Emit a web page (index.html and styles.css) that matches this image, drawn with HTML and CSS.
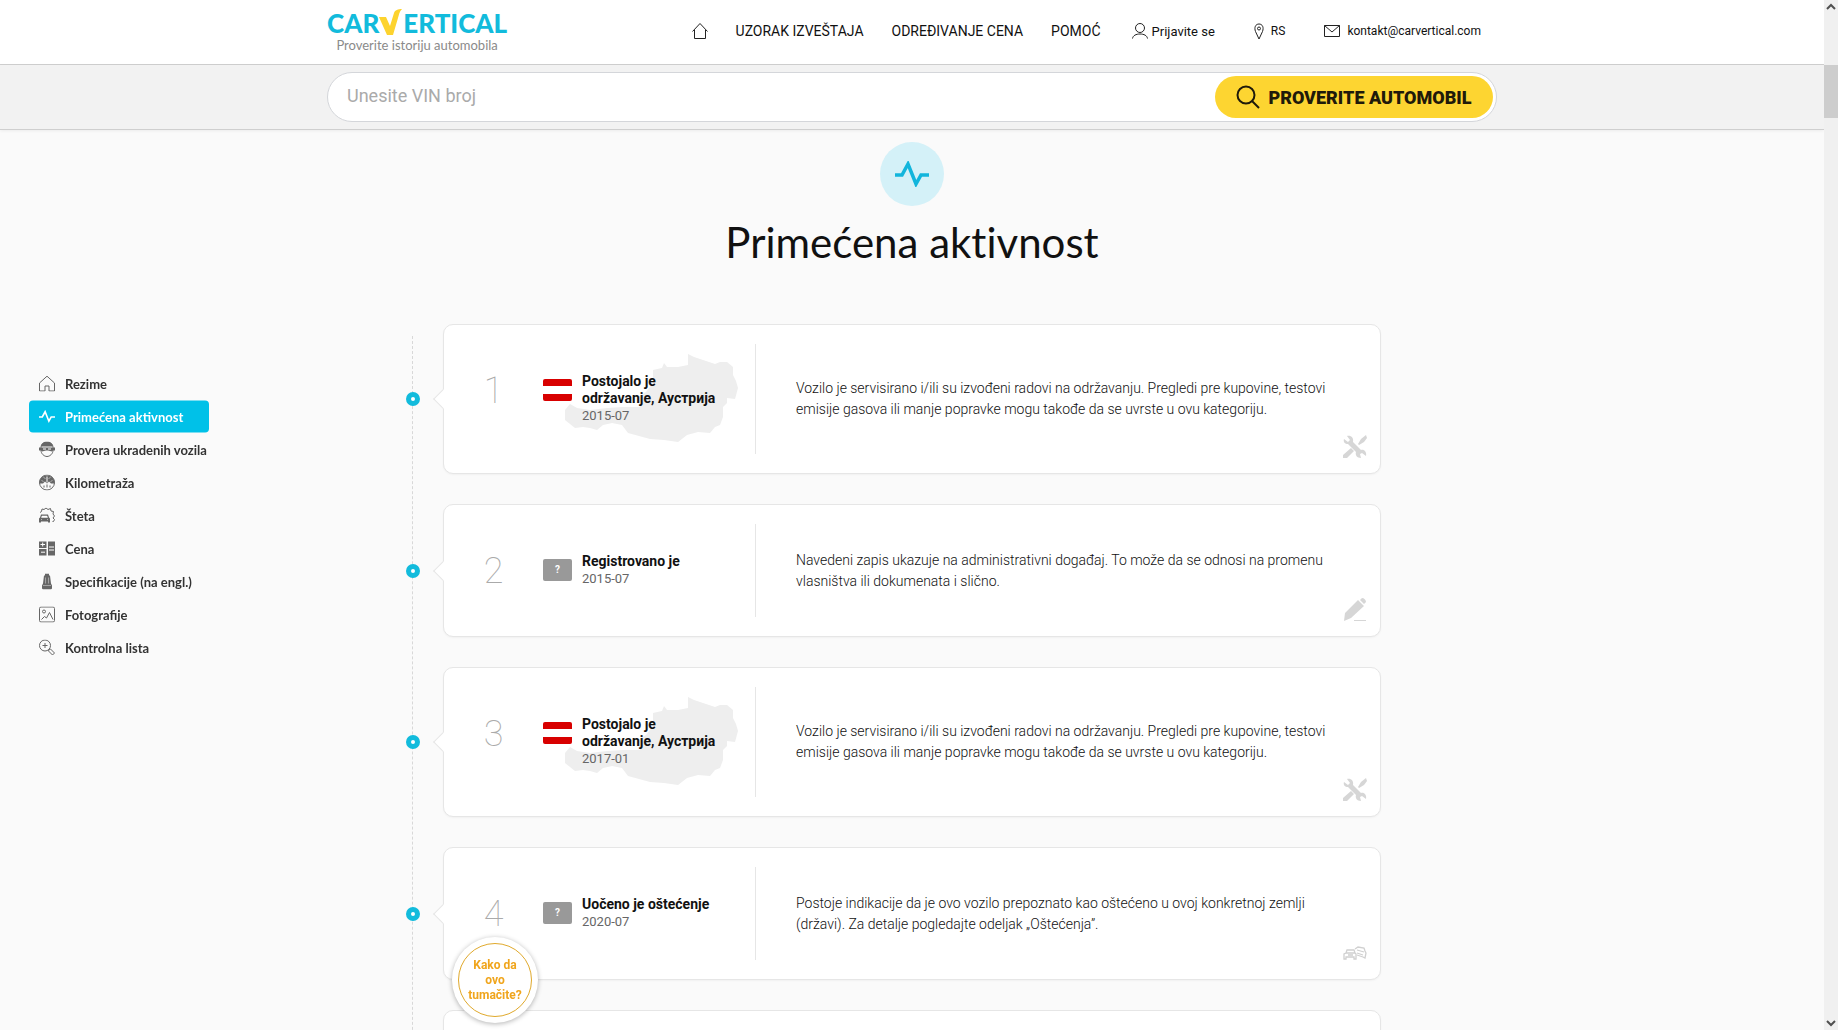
FILE: index.html
```html
<!DOCTYPE html>
<html lang="sr">
<head>
  <meta charset="UTF-8" />
  <meta name="viewport" content="width=device-width, initial-scale=1.0" />
  <title>carVertical - Primećena aktivnost</title>
  <link rel="stylesheet" href="styles.css">
</head>
<body>

  <!-- shared icons -->
  <svg class="sprite" xmlns="http://www.w3.org/2000/svg">
    <symbol id="pulse" viewBox="0 0 34 26">
      <path d="M0 14h7L13 3l8 20 5-9h8" fill="none" stroke="currentColor" stroke-width="3.500"/>
    </symbol>
    <symbol id="austria" viewBox="0 0 175 88">
      <path d="M125 0l6 3 9 3 12 4 5-2 7 0 6 5 0 8 3 6 2 7-3 11-8-1 0 5-4 4 0 10-3 8-5 2-5 6-12-1-11 3-9 7-14-2-14-1-22-6-6-8-10-2-9 2-6 5-7-2-7-1-8 1-10-8 0-10 5-6 7 4 13 2 17-2 16-1 17 0-2-10 8-5 7-9 0-13 9-2 2-5 3 4 11 0 10-2z" fill="#eee"/>
    </symbol>
    <symbol id="tools" viewBox="0 0 24 24">
      <path d="M1 4l4 3 2-2-3-4c4-1 7 2 6 6l8 8c3-1 6 2 5 6l-4-3-2 1 1 4c-4 0-6-3-5-6L5 9C2 9 0 7 1 4z" fill="#d6d6d6"/>
      <path d="M8 13l3 3-7 7-4 0 0-3zM23 0l1 3-3 4-5 3-1-1 3-5z" fill="#d6d6d6"/>
    </symbol>
    <symbol id="pencil" viewBox="0 0 24 24">
      <path d="M17 2l2-2c2 0 4 2 4 4l-2 2zM15 2l6 6L8 20l-7 3 1-8z" fill="#d6d6d6"/>
      <path d="M11 22.500h12" stroke="#d6d6d6"/>
    </symbol>
    <symbol id="cars" viewBox="0 0 24 14">
      <g fill="none" stroke="#d0d0d0" stroke-width="1.300">
        <path d="M1 13V8l2-1 1-3h7l1 3 1 1v5h-2v-2H3v2zM3 7h9M5 9h5"/>
        <path d="M12 3l3-2 6 1 1 3 1 2-1 5-2-1-6-2M14 4l7 2M14 7l6 2"/>
      </g>
    </symbol>
  </svg>

  <div class="page">
    <header class="topbar">
      <div class="container topbar-inner">
        <a class="brand" href="#">
          <span class="brand-name">CAR<svg class="brand-check" viewBox="0 0 24 28"><path d="M0 8h7l4 9L15 4c1-3 4-4 8-4-3 3-3 6-4 9l-5 17H8z" fill="#fdd32e"/></svg>ERTICAL</span>
          <span class="brand-slogan">Proverite istoriju automobila</span>
        </a>
        <nav class="topnav">
          <a href="#" aria-label="Početna">
            <svg class="icon" viewBox="0 0 16 16"><path d="M.5 8.500L8 .5l7.500 8M2.500 7v8.500h11V7" fill="none" stroke="#222"/></svg>
          </a>
          <a href="#">UZORAK IZVEŠTAJA</a>
          <a href="#">ODREĐIVANJE CENA</a>
          <a href="#">POMOĆ</a>
        </nav>
        <div class="usernav">
          <a href="#" class="login">
            <svg class="icon" viewBox="0 0 16 16"><g fill="none" stroke="#222"><ellipse cx="8" cy="5" rx="4.500" ry="4.500"/><path d="M.5 15.500C1 12.500 4 11 8 11s7 1.500 7.500 4.500"/></g></svg>
            Prijavite se
          </a>
          <a href="#" class="country">
            <svg class="pin" viewBox="0 0 10 16"><g fill="none" stroke="#222"><path d="M5 15.500L1.500 8C0 4 1.500.5 5 .5S10 4 8.500 8z"/><circle cx="5" cy="5" r="1.500"/></g></svg>
            RS
          </a>
          <a href="#" class="mail">
            <svg class="icon" viewBox="0 0 16 16"><path d="M.5 2.500h15v11H.5zM.5 2.500L8 9l7.500-6.500" fill="none" stroke="#222"/></svg>
            kontakt@carvertical.com
          </a>
        </div>
      </div>
    </header>

    <div class="searchbar">
      <form class="container search" onsubmit="return false">
        <input type="text" id="vin" aria-label="VIN broj" placeholder="Unesite VIN broj" />
        <button type="submit">
          <svg viewBox="0 0 24 24"><g fill="none" stroke="#1f1a0a" stroke-width="2"><circle cx="10" cy="10" r="8.500"/><path d="M16 16l7 7"/></g></svg>
          PROVERITE AUTOMOBIL
        </button>
      </form>
    </div>

    <main class="report">
      <div class="section-icon"><svg><use href="#pulse"/></svg></div>
      <h1>Primećena aktivnost</h1>

      <div class="timeline">
        <article class="card">
          <div class="number">1</div>
          <div class="event">
            <svg class="map"><use href="#austria"/></svg>
            <span class="flag austria"></span>
            <div class="event-text">
              <h2>Postojalo je održavanje, Аустрија</h2>
              <time datetime="2015-07">2015-07</time>
            </div>
          </div>
          <p class="description">Vozilo je servisirano i/ili su izvođeni radovi na održavanju. Pregledi pre kupovine, testovi emisije gasova ili manje popravke mogu takođe da se uvrste u ovu kategoriju.</p>
          <svg class="type-icon"><use href="#tools"/></svg>
        </article>

        <article class="card">
          <div class="number">2</div>
          <div class="event">
            <span class="flag unknown">?</span>
            <div class="event-text">
              <h2>Registrovano je</h2>
              <time datetime="2015-07">2015-07</time>
            </div>
          </div>
          <p class="description">Navedeni zapis ukazuje na administrativni događaj. To može da se odnosi na promenu vlasništva ili dokumenata i slično.</p>
          <svg class="type-icon"><use href="#pencil"/></svg>
        </article>

        <article class="card">
          <div class="number">3</div>
          <div class="event">
            <svg class="map"><use href="#austria"/></svg>
            <span class="flag austria"></span>
            <div class="event-text">
              <h2>Postojalo je održavanje, Аустрија</h2>
              <time datetime="2017-01">2017-01</time>
            </div>
          </div>
          <p class="description">Vozilo je servisirano i/ili su izvođeni radovi na održavanju. Pregledi pre kupovine, testovi emisije gasova ili manje popravke mogu takođe da se uvrste u ovu kategoriju.</p>
          <svg class="type-icon"><use href="#tools"/></svg>
        </article>

        <article class="card">
          <div class="number">4</div>
          <div class="event">
            <span class="flag unknown">?</span>
            <div class="event-text">
              <h2>Uočeno je oštećenje</h2>
              <time datetime="2020-07">2020-07</time>
            </div>
          </div>
          <p class="description">Postoje indikacije da je ovo vozilo prepoznato kao oštećeno u ovoj konkretnoj zemlji (državi). Za detalje pogledajte odeljak „Oštećenja”.</p>
          <svg class="type-icon cars"><use href="#cars"/></svg>
        </article>

        <article class="card next"></article>
      </div>
    </main>

    <nav class="sidebar">
      <a href="#">
        <svg viewBox="0 0 16 16"><path d="M.5 7.500L8 .7l7.500 6.800v8H10v-5H6v5H.5z" fill="none" stroke="#666"/></svg>
        Rezime
      </a>
      <a href="#" class="active">
        <svg><use href="#pulse"/></svg>
        Primećena aktivnost
      </a>
      <a href="#">
        <svg viewBox="0 0 16 16"><path d="M2 6c0-3 2-5 6-5s6 2 6 5v3c0 3-3 6-6 6s-6-3-6-6z" fill="none" stroke="#666"/><path d="M2 5c0-3 3-5 6-5s6 2 6 5zM0 6h16v3h-2l-1 1-4-1H7l-4 1-1-1H0z" fill="#666"/><path d="M4 7.500h3M9 7.500h3" stroke="#fff"/></svg>
        Provera ukradenih vozila
      </a>
      <a href="#">
        <svg viewBox="0 0 16 16"><circle cx="8" cy="8" r="7.500" fill="none" stroke="#666"/><path d="M0 9a8 8 0 0 1 16 0h-4l-2-2-2 2-2-2-2 2z" fill="#666"/><path d="M8 8V2M3 6l1 1M13 6l-1 1M5 3l1 1M11 3l-1 1" stroke="#fff"/><path d="M5 11v2M8 10v3M11 11v2" stroke="#666"/></svg>
        Kilometraža
      </a>
      <a href="#">
        <svg viewBox="0 0 16 16"><path d="M1 5l1.500-1L3 1.500l2 .5L7 .5l2 1.500 2.500-1L12 3.500l2.500.5-.5 2.500 1.500 2-1.500 2 1.500 1.500-1 2h-1" fill="none" stroke="#666"/><path d="M0 15v-4l1-1 1-3h7l1 3 1 1v4H9v-1H2v1z" fill="#666"/><path d="M3 8.500h5l.5 1.500h-6zM2 12h1M8 12h1" fill="#fff" stroke="#fff" stroke-width=".5"/></svg>
        Šteta
      </a>
      <a href="#">
        <svg viewBox="0 0 16 16"><path d="M0 1h7.500v6.500H0zM0 8.500h7.500V15H0zM9 1h7v14H9z" fill="#666"/><path d="M1.500 4h4.500M3.700 2v4M2 11.700h4M10 6.500h5M10 9.500h5" stroke="#fff"/></svg>
        Cena
      </a>
      <a href="#">
        <svg viewBox="0 0 16 16"><path d="M6 0h4v2h1l1 8 1 2v3l-1 1H4l-1-1v-3l1-2 1-8h1z" fill="#666"/><path d="M6.500 4v6M9.500 4v6M4 12h8" stroke="#ccc" stroke-width=".6"/></svg>
        Specifikacije (na engl.)
      </a>
      <a href="#">
        <svg viewBox="0 0 16 16"><g fill="none" stroke="#666"><rect x=".5" y=".5" width="15" height="15" rx="1.500"/><circle cx="5" cy="5" r="1.500"/><path d="M2.500 13l3-3 2 1.500L10.500 6l3.500 7"/></g></svg>
        Fotografije
      </a>
      <a href="#">
        <svg viewBox="0 0 16 16"><g fill="none" stroke="#666"><circle cx="6" cy="6" r="5.500"/><path d="M3.500 6h5M6 3.500v5M10 10l1.500-.5 4 4-2 2-4-4z"/></g></svg>
        Kontrolna lista
      </a>
    </nav>

    <button class="help" type="button"><span>Kako da ovo tumačite?</span></button>

    <div class="scrollbar">
      <svg viewBox="0 0 14 14"><path d="M3 9l4-4 4 4" fill="none" stroke="#505050" stroke-width="2"/></svg>
      <div class="thumb"></div>
      <svg viewBox="0 0 14 14"><path d="M3 5l4 4 4-4" fill="none" stroke="#505050" stroke-width="2"/></svg>
    </div>
  </div>

</body>
</html>
```
FILE: styles.css
```css
:root {
  --blue: #00c1e8;
  --yellow: #fdd531;
  --border: #e6e6e6;
  --bg: #fafafa;
  --text: #111;
}
*, *::before, *::after {
  box-sizing: border-box;
}
body {
  margin: 0;
  font-family: Roboto, "Liberation Sans", sans-serif;
  font-size: 14px;
  color: var(--text);
  background: var(--bg);
}
a {
  color: inherit;
  text-decoration: none;
}
svg {
  display: block;
  flex-shrink: 0;
}
.sprite {
  display: none;
}
.page {
  height: 100vh;
  overflow: hidden;
  padding-right: 14px;
}
.container {
  width: 100%;
  max-width: 1170px;
  margin: 0 auto;
}

/* header */
.topbar {
  background: white;
  border-bottom: 1px solid #cfcfcf;
}
.topbar-inner {
  display: flex;
  align-items: flex-start;
  height: 64px;
  padding-right: 16px;
}
.brand {
  display: flex;
  flex-direction: column;
  align-items: center;
  padding-top: 8px;
  font-family: Lato, sans-serif;
}
.brand-name {
  display: flex;
  align-items: center;
  font-size: 26px;
  font-weight: 900;
  line-height: 30px;
  color: #12bbdc;
}
.brand-check {
  width: 24px;
  height: 28px;
}
.brand-slogan {
  font-size: 13px;
  line-height: 14px;
  color: #8a8a8a;
}
.topnav, .usernav, .usernav a {
  display: flex;
  align-items: center;
}
.topnav {
  gap: 28px;
  height: 62px;
  margin-left: auto;
}
.usernav {
  gap: 39px;
  height: 62px;
  margin-left: 31px;
  font-size: 12px;
}
.usernav a {
  gap: 7px;
}
.usernav .login {
  gap: 4px;
  font-size: 13px;
}
.icon {
  width: 16px;
  height: 16px;
}
.pin {
  width: 10px;
  height: 17px;
}

/* VIN search */
.searchbar {
  height: 65px;
  padding-top: 7px;
  background: #f2f2f2;
  border-bottom: 1px solid #cfcfcf;
  box-shadow: 0 1px 3px rgba(0, 0, 0, 0.06);
}
.search {
  display: flex;
  align-items: center;
  height: 50px;
  padding: 0 3px 0 19px;
  background: white;
  border: 1px solid #d4d6da;
  border-radius: 25px;
}
.search input {
  flex: 1;
  min-width: 0;
  padding: 0 0 3px;
  border: none;
  outline: none;
  background: none;
  font: 18px Roboto, sans-serif;
}
.search input::placeholder {
  color: #aaa;
}
.search button {
  display: flex;
  align-items: center;
  justify-content: center;
  gap: 8px;
  width: 278px;
  height: 42px;
  border: none;
  border-radius: 21px;
  background: var(--yellow);
  color: #1f1a0a;
  font: 900 18px Roboto, sans-serif;
  white-space: nowrap;
  cursor: pointer;
}
.search button svg {
  width: 24px;
  height: 24px;
}

/* activity report */
.report {
  padding-top: 12px;
}
.section-icon {
  display: flex;
  align-items: center;
  justify-content: center;
  width: 64px;
  height: 64px;
  margin: 0 auto;
  border-radius: 50%;
  background: #d4f1f8;
  color: #12b5dc;
}
.section-icon svg {
  width: 34px;
  height: 26px;
}
h1 {
  margin: 11px 0 57px;
  font-family: Lato, sans-serif;
  font-size: 42px;
  font-weight: 400;
  font-variant-ligatures: none;
  line-height: 50px;
  text-align: center;
}
.timeline {
  position: relative;
  display: flex;
  flex-direction: column;
  gap: 30px;
  width: 100%;
  max-width: 938px;
  margin: 0 auto;
}
.timeline::before {
  content: "";
  position: absolute;
  top: 12px;
  bottom: 0;
  left: -31px;
  border-left: 1px dashed #d8d8d8;
}
.card {
  position: relative;
  display: flex;
  align-items: center;
  padding: 19px 0;
  background: white;
  border: 1px solid var(--border);
  border-radius: 10px;
  box-shadow: 0 1px 2px rgba(0, 0, 0, 0.04);
}
.card.next {
  height: 150px;
}
/* pointer towards the timeline */
.card::before {
  content: "";
  position: absolute;
  top: calc(50% - 7px);
  left: -8px;
  width: 14px;
  height: 14px;
  background: white;
  border: solid var(--border);
  border-width: 0 0 1px 1px;
  transform: rotate(45deg);
}
.card::after {
  content: "";
  position: absolute;
  top: calc(50% - 7px);
  left: -38px;
  width: 14px;
  height: 14px;
  border: 5px solid #12bbdc;
  border-radius: 50%;
  background: white;
}
.number {
  align-self: flex-start;
  width: 99px;
  margin-top: 30px;
  font-size: 36px;
  font-weight: 100;
  line-height: 35px;
  text-align: center;
  color: #aaa;
}
.event {
  position: relative;
  display: flex;
  align-items: flex-start;
  gap: 10px;
  width: 213px;
  padding: 29px 35px 29px 0;
  border-right: 1px solid var(--border);
}
.map {
  position: absolute;
  top: 10px;
  left: 20px;
  width: 175px;
  height: 88px;
}
.flag {
  position: relative;
  flex-shrink: 0;
  width: 29px;
  height: 22px;
  margin-top: 6px;
  border-radius: 2px;
}
.flag.austria {
  background: linear-gradient(#d80000 33%, #fff 33%, #fff 67%, #d80000 67%);
}
.flag.unknown {
  background: #999;
  color: white;
  font-size: 10px;
  font-weight: bold;
  line-height: 22px;
  text-align: center;
}
.event-text {
  position: relative;
}
.event h2 {
  margin: 0;
  font-size: 14px;
  font-weight: bold;
  line-height: 17px;
}
.event time {
  display: block;
  font-size: 13px;
  line-height: 18px;
  color: #666;
}
.description {
  flex: 1;
  margin: 0;
  padding: 0 34px 0 40px;
  font-weight: 300;
  line-height: 21px;
}
.type-icon {
  position: absolute;
  right: 13px;
  bottom: 14px;
  width: 24px;
  height: 24px;
}
.type-icon.cars {
  bottom: 19px;
  height: 14px;
}

/* section menu */
.sidebar {
  position: fixed;
  top: 50%;
  left: 29px;
  display: flex;
  flex-direction: column;
  gap: 1px;
  width: 180px;
  padding-top: 1px;
  transform: translateY(-50%);
  font-family: Lato, sans-serif;
  font-size: 13px;
  font-weight: bold;
  color: #333;
}
.sidebar a {
  display: flex;
  align-items: center;
  gap: 10px;
  height: 32px;
  padding-left: 10px;
  border-radius: 4px;
  white-space: nowrap;
}
.sidebar a.active {
  background: var(--blue);
  color: white;
}
.sidebar svg {
  width: 16px;
  height: 16px;
}

.help {
  position: fixed;
  bottom: 7px;
  left: 452px;
  width: 86px;
  height: 86px;
  padding: 6px;
  border: none;
  border-radius: 50%;
  background: white;
  box-shadow: 0 1px 5px rgba(0, 0, 0, 0.3);
  cursor: pointer;
}
.help span {
  display: flex;
  align-items: center;
  justify-content: center;
  height: 74px;
  padding: 0 8px;
  border: 1px solid #e0a92c;
  border-radius: 50%;
  color: #f0a51c;
  font: bold 12px/15px Roboto, sans-serif;
}

/* window scrollbar */
.scrollbar {
  position: fixed;
  top: 0;
  right: 0;
  bottom: 0;
  display: flex;
  flex-direction: column;
  width: 14px;
  background: #f0f0f0;
}
.scrollbar svg {
  width: 14px;
  height: 14px;
}
.scrollbar .thumb {
  height: 53px;
  margin: 51px 0 auto;
  background: #cdcdcd;
}
```
